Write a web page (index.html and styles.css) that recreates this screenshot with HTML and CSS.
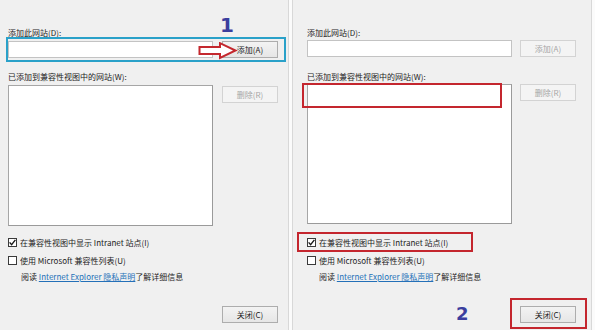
FILE: index.html
```html
<!DOCTYPE html>
<html>
<head>
<meta charset="utf-8">
<link rel="stylesheet" href="styles.css">
</head>
<body>
	<div class="screen">
		<div class="panel panel-left">
			<div class="label">添加此网站(D):</div>
			<div class="row">
				<div class="field"></div>
				<div class="btn">添加(A)</div>
			</div>
			<div class="label label-list">已添加到兼容性视图中的网站(W):</div>
			<div class="row row-list">
				<div class="listbox"></div>
				<div class="btn disabled">删除(R)</div>
			</div>
			<div class="check check-first">
				<span class="box"><svg width="9" height="9" viewBox="0 0 9 9"><path d="M1.6 4.4 L3.6 6.6 L7.4 1.9" fill="none" stroke="#1a1a1a" stroke-width="1.4"/></svg></span>
				<span>在兼容性视图中显示 Intranet 站点(I)</span>
			</div>
			<div class="check">
				<span class="box"></span>
				<span>使用 Microsoft 兼容性列表(U)</span>
			</div>
			<div class="info">阅读 <span class="link">Internet Explorer 隐私声明</span>了解详细信息</div>
			<div class="footer">
				<div class="btn">关闭(C)</div>
			</div>
		</div>
		<div class="gap"></div>
		<div class="panel panel-right">
			<div class="label">添加此网站(D):</div>
			<div class="row">
				<div class="field"></div>
				<div class="btn disabled">添加(A)</div>
			</div>
			<div class="label label-list">已添加到兼容性视图中的网站(W):</div>
			<div class="row row-list">
				<div class="listbox"></div>
				<div class="btn disabled">删除(R)</div>
			</div>
			<div class="check check-first">
				<span class="box"><svg width="9" height="9" viewBox="0 0 9 9"><path d="M1.6 4.4 L3.6 6.6 L7.4 1.9" fill="none" stroke="#1a1a1a" stroke-width="1.4"/></svg></span>
				<span>在兼容性视图中显示 Intranet 站点(I)</span>
			</div>
			<div class="check">
				<span class="box"></span>
				<span>使用 Microsoft 兼容性列表(U)</span>
			</div>
			<div class="info">阅读 <span class="link">Internet Explorer 隐私声明</span>了解详细信息</div>
			<div class="footer">
				<div class="btn">关闭(C)</div>
			</div>
		</div>

		<!-- annotations drawn over the dialogs -->
		<div class="mark mark-blue"></div>
		<div class="mark mark-list"></div>
		<div class="mark mark-check"></div>
		<div class="mark mark-close"></div>
		<div class="step step-one">1</div>
		<div class="step step-two">2</div>
		<svg class="arrow" width="40" height="18" viewBox="0 0 40 18">
			<polygon points="1.5,5 22,5 22,1.2 37.5,8.5 22,16 22,12 1.5,12" fill="#fff" stroke="#c4282e" stroke-width="2" stroke-linejoin="miter"/>
		</svg>
	</div>
</body>
</html>
```

FILE: styles.css
```css
body {
	margin: 0;
}
.screen {
	position: relative;
	display: flex;
	width: 595px;
	height: 330px;
	overflow: hidden;
	background-color: #fbfbfb;
	font-family: "Noto Sans CJK SC", "Noto Sans", sans-serif;
	font-size: 8px;
	color: #1c1c1c;
}
.panel {
	box-sizing: border-box;
	display: flex;
	flex-direction: column;
	height: 330px;
	padding-top: 28px;
	padding-bottom: 7px;
	background-color: #f0f0f0;
}
.panel-left {
	width: 289px;
	padding-left: 8px;
	border-right: 1px solid #d8d8d8;
}
.gap {
	width: 3px;
}
.panel-right {
	width: 300px;
	padding-left: 14px;
	border-left: 1px solid #d8d8d8;
	border-right: 1px solid #d8d8d8;
}
.label {
	height: 10px;
	line-height: 10px;
	white-space: nowrap;
}
.label-list {
	margin-top: 14px;
}
.panel-right .label-list {
	margin-top: 15px;
}
.row {
	display: flex;
	align-items: flex-start;
	gap: 9px;
	margin-top: 3px;
}
.panel-right .row {
	gap: 8px;
	margin-top: 2px;
}
.field {
	box-sizing: border-box;
	width: 205px;
	height: 17px;
	background-color: #fff;
	border: 1px solid #c3c3c3;
}
.listbox {
	box-sizing: border-box;
	width: 205px;
	height: 141px;
	background-color: #fff;
	border: 1px solid #a6a6a6;
	border-right-color: #9a9a9a;
	border-bottom-color: #9a9a9a;
}
.panel-right .listbox {
	height: 140px;
}
.row-list .btn {
	margin-top: 1px;
}
.panel-right .row-list .btn {
	margin-top: 0;
}
.btn {
	box-sizing: border-box;
	width: 56px;
	height: 17px;
	line-height: 15px;
	text-align: center;
	white-space: nowrap;
	border: 1px solid #adadad;
	background: linear-gradient(#f3f3f3, #e6e6e6);
	color: #1c1c1c;
}
.btn.disabled {
	border-color: #d3d3d3;
	background: #f4f4f4;
	color: #a6a6a6;
}
.check {
	display: flex;
	align-items: center;
	gap: 3px;
	height: 11px;
	margin-top: 7px;
	white-space: nowrap;
}
.check-first {
	margin-top: 11px;
}
.panel-right .check-first {
	margin-top: 13px;
}
.box {
	box-sizing: border-box;
	display: flex;
	width: 9px;
	height: 9px;
	background-color: #fff;
	border: 1px solid #3a3a3a;
}
.box svg {
	margin: -1px;
}
.info {
	height: 10px;
	line-height: 10px;
	margin-top: 6px;
	padding-left: 13px;
	white-space: nowrap;
}
.panel-right .info {
	padding-left: 12px;
}
.link {
	color: #2470b8;
	text-decoration: underline;
}
.footer {
	margin-top: auto;
	padding-left: 214px;
}
.panel-right .footer {
	padding-left: 213px;
}
.mark {
	position: absolute;
	box-sizing: border-box;
	border: 2px solid #c4262e;
}
.mark-blue {
	left: 6px;
	top: 37px;
	width: 280px;
	height: 25px;
	border-color: #2aa1c9;
}
.mark-list {
	left: 302px;
	top: 83px;
	width: 200px;
	height: 25px;
}
.mark-check {
	left: 297px;
	top: 232px;
	width: 176px;
	height: 20px;
}
.mark-close {
	left: 510px;
	top: 298px;
	width: 77px;
	height: 31px;
}
.step {
	position: absolute;
	font-family: "DejaVu Sans", sans-serif;
	font-weight: bold;
	color: #3b3e9e;
}
.step-one {
	left: 220px;
	top: 15px;
	font-size: 20px;
	line-height: 20px;
}
.step-two {
	left: 456px;
	top: 305px;
	font-size: 18px;
	line-height: 18px;
}
.arrow {
	position: absolute;
	left: 198px;
	top: 42px;
}
```
